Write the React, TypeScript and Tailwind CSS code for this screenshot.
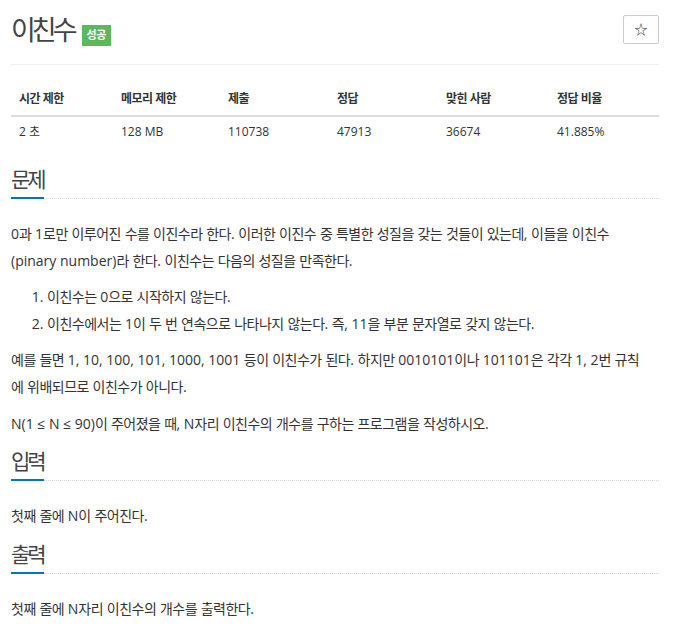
import React from 'react'

const HANGUL = /([\u1100-\u11ff\u3130-\u318f\uac00-\ud7a3]+)/

// Hangul runs get a slightly tighter face so lines keep the reference widths
function Ko({ text, k = 'text-[14px] tracking-[-0.5px]' }: { text: string; k?: string }) {
  return (
    <>
      {text.split(HANGUL).map((s, i) =>
        i % 2 ? <span key={i} className={k}>{s}</span> : <React.Fragment key={i}>{s}</React.Fragment>
      )}
    </>
  )
}

const stats = [
  ['시간 제한', '2 초'],
  ['메모리 제한', '128 MB'],
  ['제출', '110738'],
  ['정답', '47913'],
  ['맞힌 사람', '36674'],
  ['정답 비율', '41.885%'],
]

function Headline({ title }: { title: string }) {
  return (
    <div className="border-b border-dotted border-[#d5d5d5]">
      <h2 className="inline-block -mb-px border-b-2 border-[#0076c0] pb-[6px] text-[21px] leading-[24px] tracking-[-3px] font-normal text-[#444]">
        {title}
      </h2>
    </div>
  )
}

function Section({ title, first, children }: { title: string; first?: boolean; children: React.ReactNode }) {
  return (
    <section className={first ? 'mt-[20px]' : 'mt-[12px]'}>
      <Headline title={title} />
      <div className="mt-[22px] flex flex-col gap-[10px] text-[14px] leading-[26.6px] text-[#333] whitespace-nowrap">
        {children}
      </div>
    </section>
  )
}

export default function App() {
  return (
    <main
      className="min-h-screen bg-white pl-[11px] w-[659px]"
      style={{ fontFamily: '"Open Sans", "Noto Sans CJK KR", sans-serif' }}
    >
      {/* title row */}
      <header className="flex items-start justify-between border-b border-[#eee] pt-[15px] pb-[18px]">
        <div className="flex items-start gap-[8px]">
          <h1 className="text-[27px] leading-[30px] tracking-[-4px] font-normal text-[#444]">이친수</h1>
          <span className="mt-[10px] flex h-[21px] items-center bg-[#5cb85c] px-[5px] text-[11px] font-bold tracking-[-0.3px] text-white">
            성공
          </span>
        </div>
        <button className="flex h-[29px] w-[36px] items-center justify-center rounded-[2px] border border-[#ccc] bg-white text-[13px] text-[#333]">
          ☆
        </button>
      </header>

      {/* stats table */}
      <div className="mt-[18px] text-[#333]">
        <div className="grid grid-cols-[102px_107px_109px_109px_111px_1fr] border-b-2 border-[#ddd]">
          {stats.map(([h]) => (
            <div key={h} className="px-[8px] py-[7px] text-[12px] leading-[18px] font-bold tracking-[-0.5px]">
              {h}
            </div>
          ))}
        </div>
        <div className="grid grid-cols-[102px_107px_109px_109px_111px_1fr]">
          {stats.map(([h, v]) => (
            <div key={h} className="px-[8px] py-[7px] text-[12px] leading-[16px]">
              <Ko text={v} k="text-[12px]" />
            </div>
          ))}
        </div>
      </div>

      <Section title="문제" first>
        <p>
          <Ko text="0과 1로만 이루어진 수를 이진수라 한다. 이러한 이진수 중 특별한 성질을 갖는 것들이 있는데, 이들을 이친수" />
          <br />
          <Ko text="(pinary number)라 한다. 이친수는 다음의 성질을 만족한다." />
        </p>
        <ol className="list-decimal pl-[36px]">
          <li><Ko text="이친수는 0으로 시작하지 않는다." /></li>
          <li><Ko text="이친수에서는 1이 두 번 연속으로 나타나지 않는다. 즉, 11을 부분 문자열로 갖지 않는다." /></li>
        </ol>
        <p>
          <Ko text="예를 들면 1, 10, 100, 101, 1000, 1001 등이 이친수가 된다. 하지만 0010101이나 101101은 각각 1, 2번 규칙" />
          <br />
          <Ko text="에 위배되므로 이친수가 아니다." />
        </p>
        <p>
          <Ko text="N(1 ≤ N ≤ 90)이 주어졌을 때, N자리 이친수의 개수를 구하는 프로그램을 작성하시오." />
        </p>
      </Section>

      <Section title="입력">
        <p><Ko text="첫째 줄에 N이 주어진다." /></p>
      </Section>

      <Section title="출력">
        <p><Ko text="첫째 줄에 N자리 이친수의 개수를 출력한다." /></p>
      </Section>
    </main>
  )
}
